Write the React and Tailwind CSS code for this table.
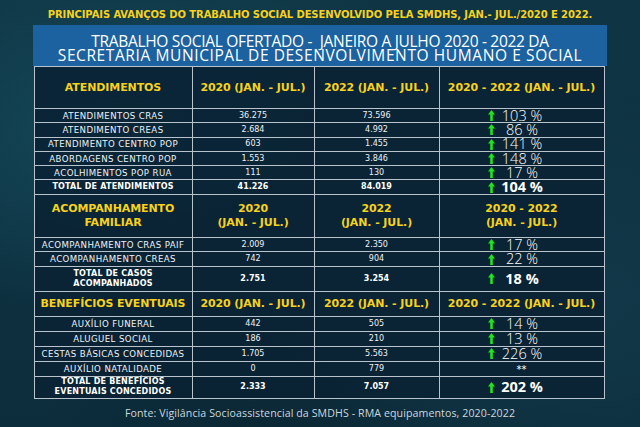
import React from "react";

const Arrow = () => (
  <svg width="7" height="11" viewBox="0 0 7 11" className="shrink-0">
    <polygon points="3.5,0 7,4.5 4.8,4.5 4.8,11 2.2,11 2.2,4.5 0,4.5" fill="#1fe41f" />
  </svg>
);

const td = "border-[1.5px] border-[#b9c3cc] p-0 text-center align-middle";
const dv = { fontFamily: '"DejaVu Sans", "Noto Sans", sans-serif' };
const os = { fontFamily: '"Open Sans", "Noto Sans", sans-serif' };

function Pct({ v, bold }) {
  return (
    <div className="flex items-center pl-[48px] h-[10px]">
      <Arrow />
      <span
        style={os}
        className={`flex-1 text-center pr-[54px] leading-[10px] text-[14.5px] ${bold ? "font-bold" : "font-light"} text-white`}
      >
        {v}
      </span>
    </div>
  );
}

function DataRow({ label, a, b, pct, h = "h-[14.3px]" }) {
  return (
    <tr className={h}>
      <td style={dv} className={`${td} text-[8.6px] leading-[8px] tracking-[0.4px] text-[#eef2f5]`}>{label}</td>
      <td style={dv} className={`${td} text-[8px] leading-[8px] text-[#eef2f5]`}>{a}</td>
      <td style={dv} className={`${td} text-[8px] leading-[8px] text-[#eef2f5]`}>{b}</td>
      <td className={td}>
        {pct === "**" ? (
          <div className="h-[10px] leading-[12px] text-[10px] text-white" style={dv}>**</div>
        ) : (
          <Pct v={pct} />
        )}
      </td>
    </tr>
  );
}

function TotalRow({ label, a, b, pct, h }) {
  return (
    <tr className={h}>
      <td style={dv} className={`${td} text-[8px] leading-[10px] font-bold tracking-[0.2px] text-white`}>{label}</td>
      <td style={dv} className={`${td} text-[8px] leading-[8px] font-bold text-white`}>{a}</td>
      <td style={dv} className={`${td} text-[8px] leading-[8px] font-bold text-white`}>{b}</td>
      <td className={td}>
        <Pct v={pct} bold />
      </td>
    </tr>
  );
}

function HeadRow({ cells, h }) {
  return (
    <tr className={h}>
      {cells.map((c, i) => (
        <td key={i} style={dv} className={`${td} text-[11px] leading-[14px] font-bold tracking-[-0.1px] text-[#f6d21c]`}>
          {c}
        </td>
      ))}
    </tr>
  );
}

export default function App() {
  return (
    <div
      className="w-[640px] h-[427px] overflow-hidden bg-[#0e3341] bg-[radial-gradient(ellipse_at_20%_30%,#14485a_0%,transparent_45%),radial-gradient(ellipse_at_85%_70%,#12394a_0%,transparent_50%),radial-gradient(ellipse_at_50%_100%,#0a2532_0%,transparent_60%),linear-gradient(180deg,#0f3544_0%,#0c2d3c_100%)] flex flex-col items-center"
      style={os}
    >
      <div style={dv} className="h-[25px] shrink-0 flex items-center justify-center pt-[4px] text-[10px] font-bold tracking-[-0.1px] text-[#f6d21c] leading-none">
        PRINCIPAIS AVANÇOS DO TRABALHO SOCIAL DESENVOLVIDO PELA SMDHS, JAN.- JUL./2020 E 2022.
      </div>
      <div className="w-[574px] h-[41px] shrink-0 bg-[#1c62a0] flex flex-col items-center justify-center pt-[5px] text-white text-[15.5px] leading-[14.5px]">
        <div className="tracking-[-0.3px]">TRABALHO SOCIAL OFERTADO -&nbsp; JANEIRO A JULHO 2020 - 2022 DA</div>
        <div className="tracking-[0.6px]">SECRETARIA MUNICIPAL DE DESENVOLVIMENTO HUMANO E SOCIAL</div>
      </div>
      <table className="w-[570px] -ml-[2px] shrink-0 border-collapse table-fixed bg-[#0a2234]/90">
        <colgroup>
          <col className="w-[158px]" />
          <col className="w-[122px]" />
          <col className="w-[125px]" />
          <col className="w-[165px]" />
        </colgroup>
        <tbody>
          <HeadRow
            h="h-[42px]"
            cells={["ATENDIMENTOS", "2020 (JAN. - JUL.)", "2022 (JAN. - JUL.)", "2020 - 2022 (JAN. - JUL.)"]}
          />
          <DataRow label="ATENDIMENTOS CRAS" a="36.275" b="73.596" pct="103 %" />
          <DataRow label="ATENDIMENTO CREAS" a="2.684" b="4.992" pct="86 %" />
          <DataRow label="ATENDIMENTO CENTRO POP" a="603" b="1.455" pct="141 %" />
          <DataRow label="ABORDAGENS CENTRO POP" a="1.553" b="3.846" pct="148 %" />
          <DataRow label="ACOLHIMENTOS POP RUA" a="111" b="130" pct="17 %" />
          <TotalRow h="h-[14.3px]" label="TOTAL DE ATENDIMENTOS" a="41.226" b="84.019" pct="104 %" />
          <HeadRow
            h="h-[43px]"
            cells={[
              <>ACOMPANHAMENTO<br />FAMILIAR</>,
              <>2020<br />(JAN. - JUL.)</>,
              <>2022<br />(JAN. - JUL.)</>,
              <>2020 - 2022<br />(JAN. - JUL.)</>,
            ]}
          />
          <DataRow h="h-[14.5px]" label="ACOMPANHAMENTO CRAS PAIF" a="2.009" b="2.350" pct="17 %" />
          <DataRow h="h-[14.5px]" label="ACOMPANHAMENTO CREAS" a="742" b="904" pct="22 %" />
          <TotalRow h="h-[25px]" label={<>TOTAL DE CASOS<br />ACOMPANHADOS</>} a="2.751" b="3.254" pct="18 %" />
          <HeadRow
            h="h-[25px]"
            cells={["BENEFÍCIOS EVENTUAIS", "2020 (JAN. - JUL.)", "2022 (JAN. - JUL.)", "2020 - 2022 (JAN. - JUL.)"]}
          />
          <DataRow h="h-[15px]" label="AUXÍLIO FUNERAL" a="442" b="505" pct="14 %" />
          <DataRow h="h-[15px]" label="ALUGUEL SOCIAL" a="186" b="210" pct="13 %" />
          <DataRow h="h-[15px]" label="CESTAS BÁSICAS CONCEDIDAS" a="1.705" b="5.563" pct="226 %" />
          <DataRow h="h-[15px]" label="AUXÍLIO NATALIDADE" a="0" b="779" pct="**" />
          <TotalRow h="h-[22px]" label={<>TOTAL DE BENEFÍCIOS<br />EVENTUAIS CONCEDIDOS</>} a="2.333" b="7.057" pct="202 %" />
        </tbody>
      </table>
      <div className="mt-[9px] text-[10.6px] leading-none text-[#cdd7de] tracking-[0.1px]">
        Fonte: Vigilância Socioassistencial da SMDHS - RMA equipamentos, 2020-2022
      </div>
    </div>
  );
}
